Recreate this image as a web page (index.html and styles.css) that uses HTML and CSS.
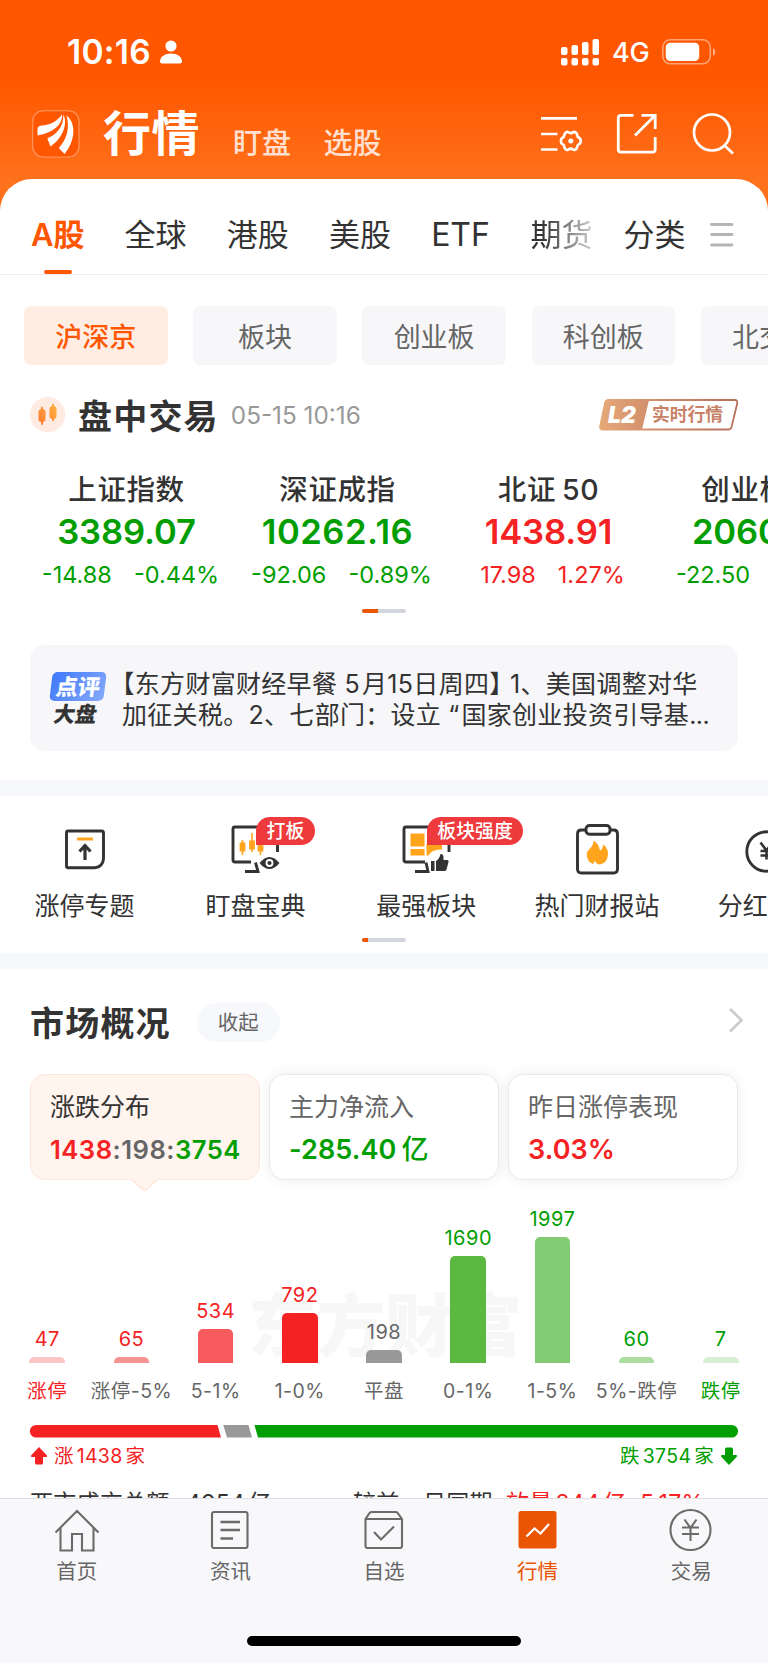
FILE: index.html
```html
<!DOCTYPE html>
<html lang="zh-CN">
<head>
<meta charset="utf-8">
<title>行情</title>
<link rel="stylesheet" href="styles.css">
</head>
<body>
<div class="phone">
  <header class="hero">
    <div class="status">
      <span class="clock">10:16</span>
      <svg class="person" width="22" height="24" viewBox="0 0 22 24" fill="#fff"><circle cx="11" cy="6" r="5.6"/><path d="M0 21.5C0 16.500 5 13.500 11 13.500S22 16.500 22 21.500Q22 23.500 20 23.500H2Q0 23.500 0 21.500Z"/></svg>
      <span class="grow"></span>
      <svg width="39" height="28" viewBox="0 0 39 28" fill="#fff"><rect x="0" y="9" width="6.500" height="8" rx="2"/><rect x="10.500" y="7" width="6.500" height="10" rx="2"/><rect x="21" y="4" width="6.500" height="13" rx="2"/><rect x="31.500" y="1" width="6.500" height="16" rx="2"/><rect x="0" y="20" width="6.500" height="7.500" rx="2"/><rect x="10.500" y="20" width="6.500" height="7.500" rx="2"/><rect x="21" y="20" width="6.500" height="7.500" rx="2"/><rect x="31.500" y="20" width="6.500" height="7.500" rx="2"/></svg>
      <span class="net">4G</span>
      <svg width="54" height="26" viewBox="0 0 54 26"><rect x=".8" y=".8" width="47.500" height="24" rx="7.500" fill="none" stroke="#fff" stroke-opacity=".45" stroke-width="1.600"/><rect x="3.700" y="3.700" width="33.500" height="18.300" rx="4.500" fill="#fff"/><path d="M51 9q2.500 1.200 2.500 4t-2.500 4z" fill="#fff" fill-opacity=".5"/></svg>
    </div>
    <div class="nav">
      <svg class="logo" width="48" height="48" viewBox="0 0 48 48"><rect x=".7" y=".7" width="46.300" height="46.300" rx="10.500" fill="#ff5600" stroke="#ff9a66" stroke-width="1.100"/><path fill="#fff" d="M5.500 25.500V19Q6 15.800 9.500 15.500C18 15 25 11.500 30 4.500C31 14 22 22.500 5.500 25.500ZM31.300 4.500C36 13.500 31 28 18.500 36.500L15.300 28.300C24 25 32 17 31.300 4.500ZM34.500 5.500C44.500 13 43.500 31 32.500 44L26.800 38C35 29 38 18 34.500 5.500Z"/></svg>
      <span class="nav-main">行情</span>
      <span class="nav-sub">盯盘</span>
      <span class="nav-sub">选股</span>
      <span class="grow"></span>
      <svg class="ic-gear" width="42" height="42" viewBox="0 0 42 42" fill="none" stroke="#fff" stroke-width="2.700"><path d="M0 5.300H36M0 21H16.500M0 36.500H16.500"/><path stroke-linejoin="round" stroke-width="2.700" d="M25 19.300q1.400-.8 2.800.2 1.900 1.300 3.900 0 1.500-1 2.900-.1 1.400.9 1.500 2.400.2 2.200 2.300 3.200 1.300.7 1.300 2.900t-1.300 3q-2.100 1-2.300 3.100-.2 1.700-1.500 2.500-1.400.8-2.900-.2-1.900-1.200-3.900 0-1.500 1-2.900.2-1.300-.8-1.500-2.500-.2-2.100-2.200-3.100-1.300-.8-1.300-3t1.300-2.900q2-1 2.200-3.200.2-1.600 1.600-2.500Z"/><circle cx="29.800" cy="28" r="2.500" fill="#fff" stroke="none"/></svg>
      <svg class="ic-share" width="42" height="42" viewBox="0 0 42 42" fill="none" stroke="#fff" stroke-width="2.800" stroke-linejoin="round"><path d="M17.500 2.300H5Q2.300 2.300 2.300 5V36.500Q2.300 39.200 5 39.200H36.500Q39.200 39.200 39.200 36.500V24"/><path stroke-linejoin="miter" d="M25.500 2.300H39.200V16M39 2.500L19 22.500"/></svg>
      <svg class="ic-search" width="42" height="42" viewBox="0 0 42 42" fill="none" stroke="#fff" stroke-width="2.700"><circle cx="20" cy="19.500" r="18"/><path d="M32.500 32.500L41 40.500"/></svg>
    </div>
  </header>

  <main class="sheet">
    <nav class="tabs">
      <span class="tab active">A股</span><span class="tab">全球</span><span class="tab">港股</span><span class="tab">美股</span><span class="tab etf">ETF</span><span class="tab fade">期货</span><span class="tab last">分类</span>
      <svg width="24" height="24" viewBox="0 0 24 24" stroke="#b5b5b5" stroke-width="2.800" stroke-linecap="round"><path d="M1.500 1.500H22M1.500 11.500H22M1.500 22H22"/></svg>
    </nav>

    <div class="chips"><span class="chip on">沪深京</span><span class="chip">板块</span><span class="chip">创业板</span><span class="chip">科创板</span><span class="chip">北交所</span></div>

    <div class="session">
      <svg width="36" height="36" viewBox="0 0 36 36"><defs><linearGradient id="cd" x1="0" y1="1" x2="1" y2="0"><stop offset="0" stop-color="#ff7a33"/><stop offset="1" stop-color="#ffb340"/></linearGradient></defs><circle cx="17.700" cy="17.700" r="17.700" fill="#ffebe2"/><g fill="url(#cd)"><path d="M8.500 14.500q0-2 2.500-2.500v-1.500q1-2 2 0V12q2.500.5 2.500 2.500v8q0 2-2.500 2.500v2q-1 2-2 0v-2q-2.500-.5-2.500-2.500zM19.500 11.500q0-2 2.500-2.500V7.500q1-2 2 0V9q2.500.5 2.500 2.500v8q0 2-2.500 2.500v1.500q-1 2-2 0V22q-2.500-.5-2.500-2.500z"/></g></svg>
      <span class="h1">盘中交易</span>
      <span class="date">05-15 10:16</span>
      <span class="grow"></span>
      <span class="l2">
        <svg class="l2-bg" width="140" height="32" viewBox="0 0 140 32"><defs><linearGradient id="lg"><stop offset="0" stop-color="#e6a978"/><stop offset=".5" stop-color="#cd8769"/><stop offset="1" stop-color="#b9705a"/></linearGradient><linearGradient id="lg2"><stop offset="0" stop-color="#e6a978"/><stop offset="1" stop-color="#d18e6c"/></linearGradient></defs><path d="M9.500 1H135.500Q139 1 138.200 4.500L132.500 28Q131.800 30.500 129 30.500H3.500Q.3 30.500 1.200 27L6 4Q6.800 1 9.500 1Z" fill="#fff" stroke="url(#lg)" stroke-width="1.800"/><path d="M9.500 1H50L43 30.500H3.500Q.3 30.500 1.200 27L6 4Q6.800 1 9.500 1Z" fill="url(#lg2)"/></svg>
        <b>L2</b><i>实时行情</i>
      </span>
    </div>

    <div class="indices">
      <div class="idx down"><span>上证指数</span><strong>3389.07</strong><p><em>-14.88</em><em>-0.44%</em></p></div>
      <div class="idx down"><span>深证成指</span><strong class="wide">10262.16</strong><p><em>-92.06</em><em>-0.89%</em></p></div>
      <div class="idx up"><span>北证<u>50</u></span><strong>1438.91</strong><p><em>17.98</em><em>1.27%</em></p></div>
      <div class="idx down"><span>创业板指</span><strong>2060.41</strong><p><em>-22.50</em><em>-1.08%</em></p></div>
    </div>
    <div class="pager"><i class="p16"></i></div>

    <section class="news">
      <div class="news-tag"><span class="tag-top">点评</span><span class="tag-bot">大盘</span></div>
      <div class="news-text">
        <div><span class="half">【</span>东方财富财经早餐<span class="sp"> 5</span>月15日周四<span class="half">】</span><span class="sp1">1</span>、美国调整对华</div>
        <div>加征关税。2、七部门：设立<span class="q">“</span>国家创业投资引导基<span class="dots">...</span></div>
      </div>
    </section>
    <div class="band b1"></div>

    <div class="tools">
      <div class="tool"><svg width="60" height="60" viewBox="0 0 60 60" fill="none" stroke="#333" stroke-width="2.900"><path d="M12.500 12H46.500Q48.500 12 48.500 14V40Q47.500 48 40 48.700H13Q11.500 48.700 11.500 47V13.500Q11.500 12 13 12Z"/><path d="M22 20H38" stroke="#ffa41c" stroke-width="3"/><path d="M30 41V27M24.500 32.500L30 26.500L35.500 32.500" stroke-width="3.200"/></svg><span>涨停专题</span></div>
      <div class="tool"><svg width="60" height="60" viewBox="0 0 60 60" fill="none" stroke="#333" stroke-width="2.900"><path d="M26 43H10Q8 43 8 41V10Q8 8 10 8H50.500Q52.500 8 52.500 10V33M20 52.500H33L30.500 43.500"/><path stroke="#ffa41c" stroke-width="1.600" d="M17.500 21V36M27 14V33M35.500 20V36"/><path stroke="#ffa41c" stroke-width="5.800" d="M17.500 23.500V32.500M27 21.500V30.500M35.500 23.500V32.500"/><path d="M34.500 44Q44.500 32 54.500 44Q44.500 56 34.500 44Z" fill="#333" stroke="none"/><circle cx="44.500" cy="44" r="3" stroke="#fff" stroke-width="1.800"/></svg><span>盯盘宝典</span><b class="badge one">打板</b></div>
      <div class="tool"><svg width="60" height="60" viewBox="0 0 60 60" fill="none" stroke="#333" stroke-width="2.900"><path d="M29 43H10Q8 43 8 41V10Q8 8 10 8H51Q53 8 53 10V33M19 52.500H32L30 43.500"/><path d="M14.500 14.500H28.500V27.500H14.500ZM14.500 30H28.500V36.500H14.500ZM30.500 25H46V30.500Q36 30 32.500 36.500H30.500Z" fill="#ffa41c" stroke="none"/><path d="M35 42H38.500V52H35ZM40 42Q43.500 40 44.500 35Q48 34 47.500 41H51.500Q53 41.500 52.500 43L50.500 50.500Q50 52 48.500 52H40Z" fill="#333" stroke="none"/></svg><span>最强板块</span><b class="badge two">板块强度</b></div>
      <div class="tool"><svg width="60" height="60" viewBox="0 0 60 60" fill="none" stroke="#333" stroke-width="2.900"><path d="M19 11H14.500Q10.500 11 10.500 15V50Q10.500 54 14.500 54H46.500Q50.500 54 50.500 50V15Q50.500 11 46.500 11H42.500"/><rect x="19" y="6.500" width="24" height="8.800" rx="3.500"/><path d="M26.500 21.500Q31.500 24.500 33 31.500Q36 30.500 36 25.500Q41 28.500 41 35Q40.500 44.500 33 45.500Q29.500 45.500 27.500 41.500L26.500 45Q20 43 19.700 35.500Q19.800 32.500 22.500 30Q26.500 26.500 26.500 21.500Z" fill="#ffa41c" stroke="none"/></svg><span>热门财报站</span></div>
      <div class="tool"><svg width="60" height="60" viewBox="0 0 60 60" fill="none" stroke="#333" stroke-width="2.900"><circle cx="28.500" cy="32.500" r="19.700"/><path d="M22.500 23.500L28.500 31.500L34.500 23.500M28.500 31.500V40.500M22.500 32H34.500M22.500 36.500H34.500" stroke-width="2.600"/></svg><span>分红送转</span></div>
    </div>
    <div class="pager p2"><i class="p6"></i></div>
    <div class="band b2"></div>

    <div class="mk-head">
      <span class="h1">市场概况</span><span class="fold">收起</span><span class="grow"></span>
      <svg width="16" height="26" viewBox="0 0 16 26" fill="none" stroke="#ccc" stroke-width="2.800"><path d="M2 2L13.500 13.200L2 24.500"/></svg>
    </div>
    <div class="cards">
      <div class="card sel"><span>涨跌分布</span><strong><s class="r">1438</s><s class="g">:198:</s><s class="gr">3754</s></strong><svg class="tip" width="28" height="14" viewBox="0 0 28 14"><path d="M0 1L11 11Q13.500 13 16 11L27 1" fill="#fff4ee" stroke="#ffe6da" stroke-width="1.500"/><path d="M0 0H28" stroke="#fff4ee" stroke-width="2"/></svg></div>
      <div class="card"><span>主力净流入</span><strong class="gr">-285.40<s class="yi">亿</s></strong></div>
      <div class="card"><span>昨日涨停表现</span><strong class="r">3.03%</strong></div>
    </div>

    <div class="chart">
      <div class="water">东方财富</div>
      <div class="col r"><b>47</b><i style="height:6.500px;background:#fcc6c6"></i><span class="r">涨停</span></div>
      <div class="col r"><b>65</b><i style="height:6.500px;background:#f99393"></i><span>涨停-5%</span></div>
      <div class="col r"><b>534</b><i style="height:34px;background:#f85b5d"></i><span>5-1%</span></div>
      <div class="col r"><b>792</b><i style="height:50.500px;background:#f52223"></i><span>1-0%</span></div>
      <div class="col g"><b>198</b><i style="height:13px;background:#999"></i><span>平盘</span></div>
      <div class="col gr"><b>1690</b><i style="height:107px;background:#5bb841"></i><span>0-1%</span></div>
      <div class="col gr"><b>1997</b><i style="height:126.500px;background:#84cc74"></i><span>1-5%</span></div>
      <div class="col gr"><b>60</b><i style="height:6.500px;background:#acdda2"></i><span>5%-跌停</span></div>
      <div class="col gr"><b>7</b><i style="height:6.500px;background:#d5efd0"></i><span class="gr">跌停</span></div>
    </div>

    <svg class="ratio" width="708" height="13" viewBox="0 0 708 13"><path d="M6.200 0H187.500L191 12.600H6.200A6.300 6.300 0 0 1 6.200 0Z" fill="#f52223"/><path d="M193.300 0H218.500L222 12.600H197Z" fill="#999"/><path d="M224.500 0H701.700A6.300 6.300 0 0 1 701.700 12.600H228Z" fill="#009e00"/></svg>
    <div class="counts">
      <svg width="18" height="18" viewBox="0 0 18 18" fill="#f52223"><path d="M9 0L17 8.500Q17.500 10 16 10H13V16Q13 17.500 11.500 17.500H6.500Q5 17.500 5 16V10H2Q.5 10 1 8.500Z"/></svg>
      <span class="r">涨<u>1438</u>家</span><span class="grow"></span><span class="gr">跌<u>3754</u>家</span>
      <svg class="flip" width="18" height="18" viewBox="0 0 18 18" fill="#009e00"><path d="M9 0L17 8.500Q17.500 10 16 10H13V16Q13 17.500 11.500 17.500H6.500Q5 17.500 5 16V10H2Q.5 10 1 8.500Z"/></svg>
    </div>
    <div class="turnover"><span class="t1">两市成交总额</span><span class="t2">4954<s>亿</s></span><span class="t3">较前一日同期</span><span class="t4 r">放量<s>244</s><s>亿</s></span><span class="r">5.17%</span></div>
  </main>

  <footer class="bar">
    <div class="items">
      <div class="item"><svg width="46" height="44" viewBox="0 0 46 44" fill="none" stroke="#6b6b6b" stroke-width="2.100"><path d="M1.500 24.500L23 3L44.500 24.500M6.500 20V42.500H18V26H28V42.500H39.500V20"/></svg><span>首页</span></div>
      <div class="item"><svg width="46" height="44" viewBox="0 0 46 44" fill="none" stroke="#6b6b6b" stroke-width="2.100"><rect x="5" y="4" width="35.500" height="36" rx="2"/><path d="M13.500 14H33M13.500 22H33M13.500 30.500H26" stroke-width="2.400"/></svg><span>资讯</span></div>
      <div class="item"><svg width="46" height="44" viewBox="0 0 46 44" fill="none" stroke="#6b6b6b" stroke-width="2.100"><path d="M4.500 11L8.500 5Q9 4 10.500 4H34.500Q36 4 36.700 5L41 11V38Q41 40 39 40H6.500Q4.500 40 4.500 38ZM4.500 11H41M13 24L20 31.500L33 18.500"/></svg><span>自选</span></div>
      <div class="item now"><svg width="46" height="44" viewBox="0 0 46 44" fill="none"><rect x="3.500" y="3" width="38" height="37.500" rx="2.500" fill="#ea5504"/><path d="M11.500 28.500L19.500 20.500L25.500 25.500L34 16" stroke="#fff" stroke-width="2.200"/></svg><span>行情</span></div>
      <div class="item"><svg width="46" height="44" viewBox="0 0 46 44" fill="none" stroke="#6b6b6b" stroke-width="2.100"><circle cx="22.500" cy="22" r="20"/><path d="M16.500 11.500L22.500 20L28.500 11.500M22.500 20V33M14 19.500H31M14 26H31"/></svg><span>交易</span></div>
    </div>
    <div class="home"></div>
  </footer>
</div>
</body>
</html>
```
FILE: styles.css
```css
* { box-sizing: border-box; }
body { margin: 0; }
.phone { width: 768px; height: 1663px; overflow: hidden; background: #fff; position: relative; font-family: Inter, "Noto Sans CJK SC", sans-serif; color: #333; white-space: nowrap; display: flex; flex-direction: column; }
svg { display: block; flex: none; overflow: visible; }
s, u { text-decoration: none; }
em, i { font-style: normal; }
p { margin: 0; }
.grow { flex: 1; }
.r { color: #f52223; }
.gr { color: #009e00; }
.g { color: #666; }

.hero { flex: none; height: 219px; background: linear-gradient(#ff5600 0, #ff5600 78px, #ff711b 180px, #ff711b); color: #fff; }
.status { height: 103px; padding: 0 52px 0 67px; display: flex; align-items: center; }
.clock { font-size: 33.500px; font-weight: 600; line-height: 40px; width: 93px; letter-spacing: .3px; }
.net { font-size: 27px; line-height: 40px; margin: 0 13px 0 12px; width: 37px; font-weight: 500; letter-spacing: -.3px; padding-top: 2px; }
.nav { height: 60px; margin-top: 1px; padding: 0 34px 0 32px; display: flex; align-items: center; }
.nav-main { font-size: 48px; line-height: 60px; font-weight: 700; margin: 0 33px 0 23px; letter-spacing: .5px; }
.nav-sub { font-size: 29px; line-height: 36px; margin: 20px 32.500px 0 0; font-weight: 500; color: #ffe0d0; }
.ic-gear { margin-right: 33px; }
.ic-share { margin-right: 34px; }

.sheet { flex: none; height: 1319px; margin-top: -40px; background: #fff; border-radius: 32px 32px 0 0; overflow: hidden; }
.tabs { height: 96px; border-bottom: 1px solid #ececee; padding: 0 36px 0 31px; display: flex; align-items: center; font-size: 31px; }
.tab { line-height: 96px; height: 95px; margin: 16px 40.200px 0 0; position: relative; }
.tab.active { color: #ff5600; font-weight: 600; margin-right: 40px; }
.tab.active::after { content: ""; position: absolute; left: 13px; bottom: 8px; width: 28px; height: 4px; border-radius: 2px; background: #ff5600; }
.tab.etf { margin-right: 40.500px; font-size: 32px; }
.tab.fade { margin-right: 31px; background: linear-gradient(90deg, #333 20%, #ccc 100%); -webkit-background-clip: text; color: transparent; }
.tab.last { margin-right: 24.500px; }
.tabs svg { margin-top: 16px; }

.chips { display: flex; gap: 25.700px; padding: 31px 0 0 24px; }
.chip { flex: none; width: 143.500px; height: 59px; line-height: 63px; border-radius: 7px; background: #f7f7fa; color: #666; font-size: 27px; text-align: center; }
.chip.on { background: #ffede4; color: #ff5600; font-weight: 500; }

.session { height: 60px; margin-top: 20px; padding: 0 29px 0 30px; display: flex; align-items: center; }
.h1 { font-size: 34px; font-weight: 600; letter-spacing: 1.200px; line-height: 50px; padding-top: 3px; }
.session .h1 { margin: 0 12px 0 12px; }
.date { font-size: 24.300px; color: #999; line-height: 40px; }
.l2 { position: relative; width: 140px; height: 32px; display: flex; align-items: center; }
.l2-bg { position: absolute; left: 0; top: 0; }
.l2 b { position: relative; width: 53px; padding-left: 9px; font-size: 23px; font-weight: 900; font-style: italic; color: #fff; line-height: 32px; }
.l2 i { position: relative; font-size: 17.800px; font-weight: 700; color: #c88268; line-height: 32px; }

.indices { display: flex; margin-left: 21px; padding-top: 28px; }
.idx { flex: none; width: 211px; display: flex; flex-direction: column; align-items: center; }
.idx span { font-size: 28.500px; line-height: 34px; font-weight: 500; color: #333; letter-spacing: .6px; }
.idx u { margin-left: 6px; }
.idx strong { font-size: 34.600px; line-height: 42px; font-weight: 600; margin-top: 3px; letter-spacing: -.1px; }
.idx strong.wide { letter-spacing: .5px; }
.idx p { display: flex; gap: 22px; font-size: 23.500px; line-height: 30px; margin: 8px 0 0 8px; }
.down { color: #009e00; }
.up { color: #f52223; }
.pager { width: 44px; height: 4px; border-radius: 2px; background: #d3d6dd; margin: 19px 0 0 362px; overflow: hidden; }
.pager i { display: block; height: 4px; background: #ea5504; }
.p16 { width: 16px; }
.p6 { width: 6px; }

.news { margin: 32px 30px 0; height: 106px; border-radius: 14px; background: #f7f7fa; display: flex; padding: 24px 0 0 21px; }
.news-tag { position: relative; width: 56px; flex: none; padding-top: 3px; }
.news-tag span { display: block; font-weight: 900; }
.tag-top { width: 54px; height: 29px; line-height: 30px; border-radius: 5px; transform: skewX(-7deg); background: linear-gradient(120deg, #3f78fb, #85aafc); color: #fff; font-size: 22px; text-align: center; }
.tag-bot { width: 54px; font-size: 21.500px; line-height: 24px; transform: skewX(-10deg); padding-left: 3px; margin-top: 1px; }
.news-text { margin-left: 15px; font-size: 25px; line-height: 30.600px; letter-spacing: .3px; }
.half { font-feature-settings: "halt"; }
.sp { margin-right: 2px; }
.sp1 { margin-left: 8px; }
.q { margin-left: 7px; margin-right: 2px; }
.dots { letter-spacing: -.5px; }
.band { height: 16px; background: #f6f8fb; }
.b1 { margin-top: 29px; }

.tools { display: flex; height: 142px; padding-top: 23px; }
.tool { position: relative; flex: none; width: 170.800px; display: flex; flex-direction: column; align-items: center; font-size: 25px; }
.tool:first-child { margin-left: -.8px; }
.tool span { line-height: 32px; margin-top: 11px; }
.badge { position: absolute; top: -2px; height: 28px; line-height: 29px; padding: 0 10.500px; border-radius: 14px 14px 14px 0; background: #ee3a3d; color: #fff; font-size: 18.900px; font-weight: 500; }
.badge.one { left: 86px; }
.badge.two { left: 86px; }
.p2 { margin-top: 0; }
.b2 { margin-top: 11px; }

.mk-head { height: 80px; display: flex; align-items: center; padding: 0 24px 0 30px; margin-top: 13px; }
.mk-head svg { margin-top: -5px; }
.fold { width: 83px; height: 39px; line-height: 39px; border-radius: 20px; background: #f6f8fb; text-align: center; font-size: 20.500px; color: #666; margin-left: 26px; }
.cards { display: flex; gap: 9px; margin: 12px 30px 0; }
.card { position: relative; flex: 1; height: 106px; border-radius: 15px; border: 1px solid #e9e9e9; box-shadow: 0 0 14px rgba(0,0,0,.07); background: #fff; padding: 17px 0 0 19px; color: #666; }
.card.sel { background: #fff4ee; border: 1.500px solid #ffe6da; box-shadow: none; color: #333; }
.card span { display: block; font-size: 25px; line-height: 30px; }
.card strong { display: block; font-size: 27px; line-height: 32px; font-weight: 600; margin-top: 12px; letter-spacing: .1px; }
.card.sel strong { font-size: 25.600px; letter-spacing: .5px; }
.card .yi { font-weight: 500; margin-left: 5px; }
.tip { position: absolute; left: 100px; top: 103px; }

.chart { position: relative; height: 226px; padding-left: 5.200px; display: flex; }
.water { position: absolute; left: 248px; top: 102px; font-size: 68.500px; line-height: 90px; font-weight: 900; color: #f7f7f7; }
.col { position: relative; width: 84.200px; display: flex; flex-direction: column; align-items: center; justify-content: flex-end; font-size: 20px; letter-spacing: .5px; }
.col b { font-weight: 400; line-height: 24px; margin-bottom: 6px; }
.col i { width: 35.600px; border-radius: 5px 5px 0 0; }
.col span { font-size: 19.500px; line-height: 24px; margin: 16px 0 3px; }
.col span:not(.r):not(.gr) { color: #666; }
.ratio { margin: 19px 0 0 30px; }
.counts { display: flex; align-items: center; height: 24px; margin: 6px 30px 0; font-size: 19.500px; letter-spacing: .2px; }
.counts span { line-height: 24px; }
.counts .r { margin-left: 6px; }
.counts .gr { margin-right: 6px; }
.counts u { margin: 0 3px; letter-spacing: .3px; }
.flip { transform: scaleY(-1); }
.turnover { display: flex; padding-left: 30px; margin-top: 19px; font-size: 23px; line-height: 32px; letter-spacing: .3px; }
.t1 { width: 156px; }
.t2 { width: 167px; }
.t3 { width: 153px; }
.t4 { width: 134px; }
.turnover s { margin-left: 3px; }

.bar { position: relative; flex: none; height: 165px; background: #f8f8fb; border-top: 1px solid #dfdfe5; }
.items { display: flex; padding-top: 9px; }
.item { flex: 1; display: flex; flex-direction: column; align-items: center; font-size: 20.500px; color: #666; }
.item span { line-height: 26px; margin-top: 7px; }
.item.now { color: #ea5504; }
.home { width: 274px; height: 10px; border-radius: 5px; background: #000; margin: 51px 0 0 247px; }
```
